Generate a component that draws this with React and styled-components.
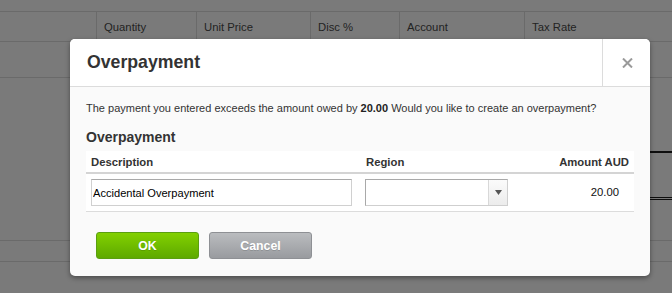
import React from 'react';
import styled, { createGlobalStyle } from 'styled-components';

const Global = createGlobalStyle`
  html, body { margin: 0; padding: 0; }
  body {
    font-family: "Liberation Sans", Arial, sans-serif;
    background: #fff;
    overflow: hidden;
  }
  #root { width: 672px; height: 293px; position: relative; overflow: hidden; }
`;

const Page = styled.div`
  display: flex;
  flex-direction: column;
  width: 672px;
  height: 293px;
  padding-top: 11px;
  box-sizing: border-box;
`;

const HeadRow = styled.div`
  display: grid;
  grid-template-columns: 96px 100px 114px 89px 125px 1fr;
  height: 31px;
  box-sizing: border-box;
  border-top: 1px solid #dedede;
  border-bottom: 1px solid #dedede;
`;

const HeadCell = styled.div`
  display: flex;
  align-items: center;
  padding-left: 7px;
  font-size: 11.3px;
  color: #4a4a4a;
  border-left: ${(p) => (p.$first ? 'none' : '1px solid #dedede')};
`;

const ItemRow = styled.div`
  height: 36px;
  box-sizing: border-box;
  border-bottom: 1px solid #dedede;
`;

const Totals = styled.div`
  height: 162px;
  display: flex;
  flex-direction: column;
  align-items: flex-end;
`;

const SubTotal = styled.div`
  width: 200px;
  height: 75px;
  box-sizing: border-box;
  border-bottom: 2px solid #1e1e1e;
`;

const GrandTotal = styled.div`
  width: 200px;
  height: 47px;
  box-sizing: border-box;
  border-bottom: 3px double #1e1e1e;
`;

const FooterRow = styled.div`
  height: 22px;
  box-sizing: border-box;
  border-top: 1px solid #dedede;
  border-bottom: 1px solid #dedede;
`;

const Overlay = styled.div`
  position: absolute;
  inset: 0;
  background: rgba(0, 0, 0, 0.52);
  display: flex;
  align-items: flex-start;
  padding: 39px 0 0 70px;
`;

const Modal = styled.div`
  width: 580px;
  background: #fafafa;
  border-radius: 5px;
  box-shadow: 0 2px 5px rgba(0, 0, 0, 0.4);
  display: flex;
  flex-direction: column;
  overflow: hidden;
`;

const ModalHeader = styled.div`
  display: flex;
  height: 48px;
  box-sizing: border-box;
  background: #fff;
  border-bottom: 1px solid #dcdcdc;
`;

const Title = styled.h2`
  flex: 1;
  margin: 0;
  padding-left: 17px;
  display: flex;
  align-items: center;
  font-size: 17.7px;
  font-weight: bold;
  color: #333;
`;

const CloseButton = styled.div`
  width: 48px;
  box-sizing: border-box;
  border-left: 1px solid #dcdcdc;
  display: flex;
  align-items: center;
  justify-content: center;
  padding-left: 1px;
`;

const Body = styled.div`
  padding: 14px 16px 17px;
`;

const Message = styled.p`
  margin: 0;
  font-size: 11px;
  line-height: 14px;
  color: #333;
  white-space: nowrap;
  strong { color: #222; }
`;

const SubHeading = styled.h3`
  margin: 14px 0 5px;
  font-size: 14px;
  line-height: 17px;
  font-weight: bold;
  color: #333;
`;

const Grid = styled.div`
  display: grid;
  grid-template-columns: 274px 160px 1fr;
  background: #fff;
`;

const Th = styled.div`
  height: 23px;
  box-sizing: border-box;
  border-bottom: 2px solid #d4d4d4;
  display: flex;
  align-items: center;
  font-size: 11.3px;
  font-weight: bold;
  color: #333;
  padding: ${(p) => (p.$right ? '0 5px 0 0' : '0 0 0 ' + (p.$pl || 5) + 'px')};
  justify-content: ${(p) => (p.$right ? 'flex-end' : 'flex-start')};
`;

const Td = styled.div`
  height: 38px;
  box-sizing: border-box;
  border-bottom: 1px solid #dcdcdc;
  display: flex;
  align-items: center;
  font-size: 11.3px;
  color: #111;
  padding: ${(p) => (p.$right ? '0 15px 1px 0' : '0 0 0 ' + (p.$pl || 5) + 'px')};
  justify-content: ${(p) => (p.$right ? 'flex-end' : 'flex-start')};
`;

const TextInput = styled.input`
  width: 261px;
  height: 27px;
  box-sizing: border-box;
  border: 1px solid #d0d0d0;
  border-top-color: #a9a9a9;
  padding: 0 1px;
  font-family: "Liberation Sans", Arial, sans-serif;
  font-size: 11.1px;
  color: #000;
  background: #fff;
  outline: none;
`;

const Select = styled.div`
  width: 143px;
  height: 27px;
  box-sizing: border-box;
  border: 1px solid #cfcfcf;
  border-top-color: #a9a9a9;
  border-left-color: #a9a9a9;
  display: flex;
  background: #fff;
`;

const SelectField = styled.div`
  flex: 1;
`;

const SelectArrow = styled.div`
  width: 18px;
  border-left: 1px solid #d8d8d8;
  background: linear-gradient(#fbfbfb, #ececec);
  display: flex;
  align-items: center;
  justify-content: center;
`;

const Actions = styled.div`
  display: flex;
  gap: 10px;
  margin-top: 20px;
  padding-left: 10px;
`;

const Button = styled.button`
  width: 103px;
  height: 27px;
  box-sizing: border-box;
  border-radius: 3px;
  border: 1px solid ${(p) => (p.$primary ? '#5a9f10' : '#8e9094')};
  background: ${(p) =>
    p.$primary
      ? 'linear-gradient(#82d000, #5ea900)'
      : 'linear-gradient(#babcbf, #999b9f)'};
  color: #fff;
  font-family: "Liberation Sans", Arial, sans-serif;
  font-size: 12.3px;
  font-weight: bold;
  text-shadow: 0 1px 0 rgba(0, 0, 0, 0.15);
  padding: 0;
  cursor: pointer;
`;

export default function App() {
  return (
    <>
      <Global />
      <Page>
        <HeadRow>
          <HeadCell $first />
          <HeadCell>Quantity</HeadCell>
          <HeadCell>Unit Price</HeadCell>
          <HeadCell>Disc %</HeadCell>
          <HeadCell>Account</HeadCell>
          <HeadCell>Tax Rate</HeadCell>
        </HeadRow>
        <ItemRow />
        <Totals>
          <SubTotal />
          <GrandTotal />
        </Totals>
        <FooterRow />
      </Page>
      <Overlay>
        <Modal>
          <ModalHeader>
            <Title>Overpayment</Title>
            <CloseButton>
              <svg width="11" height="10" viewBox="0 0 11 10">
                <path d="M1 0.5 L10 9.5 M10 0.5 L1 9.5" stroke="#9a9a9a" strokeWidth="2" />
              </svg>
            </CloseButton>
          </ModalHeader>
          <Body>
            <Message>
              The payment you entered exceeds the amount owed by <strong>20.00</strong> Would you like to create an overpayment?
            </Message>
            <SubHeading>Overpayment</SubHeading>
            <Grid>
              <Th>Description</Th>
              <Th $pl={6}>Region</Th>
              <Th $right>Amount AUD</Th>
              <Td>
                <TextInput defaultValue="Accidental Overpayment" />
              </Td>
              <Td>
                <Select>
                  <SelectField />
                  <SelectArrow>
                    <svg width="7" height="5" viewBox="0 0 7 5">
                      <path d="M0 0 H7 L3.5 5 Z" fill="#555" />
                    </svg>
                  </SelectArrow>
                </Select>
              </Td>
              <Td $right>20.00</Td>
            </Grid>
            <Actions>
              <Button $primary>OK</Button>
              <Button>Cancel</Button>
            </Actions>
          </Body>
        </Modal>
      </Overlay>
    </>
  );
}
